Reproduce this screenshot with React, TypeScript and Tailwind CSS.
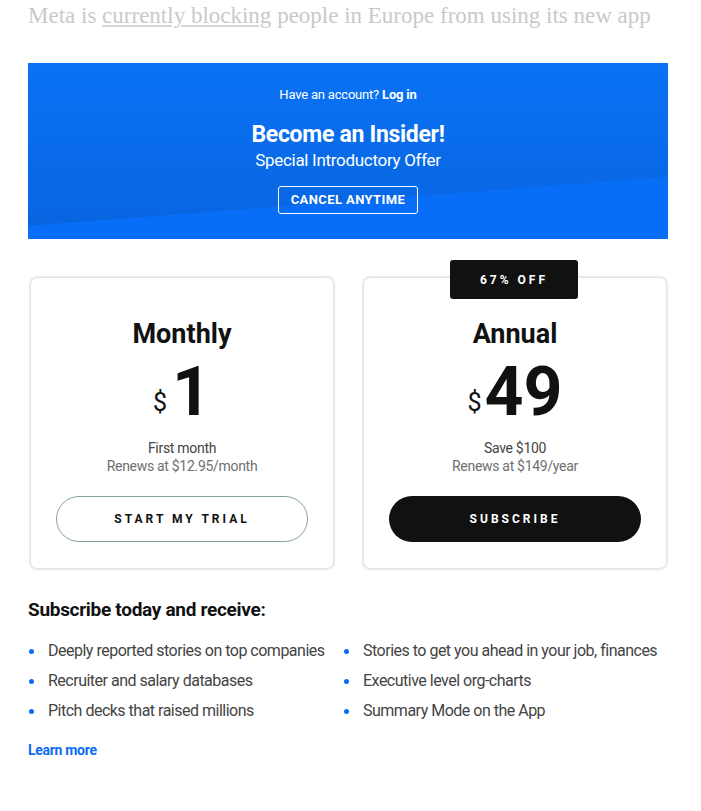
import React from 'react';

const benefits = [
  'Deeply reported stories on top companies',
  'Stories to get you ahead in your job, finances',
  'Recruiter and salary databases',
  'Executive level org-charts',
  'Pitch decks that raised millions',
  'Summary Mode on the App',
];

const sans = { fontFamily: 'Roboto, "Liberation Sans", sans-serif' };

const App: React.FC = () => {
  return (
    <div className="bg-white w-[701px] h-[811px] overflow-hidden px-7" style={sans}>
      <p
        className="text-[23px] leading-[32px] text-[#c9c9c9] whitespace-nowrap"
        style={{ fontFamily: '"Liberation Serif", serif' }}
      >
        Meta is <span className="underline decoration-[#d5d5d5] underline-offset-2">currently blocking</span> people in Europe from using its new app
      </p>

      {/* banner */}
      <div className="relative mt-[31px] h-[176px] w-[640px] overflow-hidden bg-[#0a72f5] text-white">
        <svg className="absolute inset-0" width="640" height="176" viewBox="0 0 640 176">
          <defs>
            <linearGradient id="bnr" x1="0" y1="0" x2="0" y2="1">
              <stop offset="0" stopColor="#0a72f5" />
              <stop offset="1" stopColor="#0865e0" />
            </linearGradient>
          </defs>
          <polygon points="0,0 640,0 640,114 0,163" fill="url(#bnr)" />
          <polygon points="0,163 640,114 640,176 0,176" fill="#086ef8" />
        </svg>
        <div className="relative flex flex-col items-center pt-[24px]">
          <p className="text-[13px] leading-[16px] tracking-[-0.2px]">
            Have an account? <span className="font-bold">Log in</span>
          </p>
          <p className="mt-[18px] text-[23px] leading-[28px] font-bold tracking-[-0.3px]">Become an Insider!</p>
          <p className="text-[17px] leading-[22px] tracking-[-0.3px]">Special Introductory Offer</p>
          <div className="mt-[15px] border border-white rounded-[3px] w-[140px] h-[28px] flex items-center justify-center text-[13px] font-bold tracking-[0.4px]">
            CANCEL ANYTIME
          </div>
        </div>
      </div>

      {/* cards */}
      <div className="mt-[21px] flex gap-[31px] px-[3px]">
        <div className="relative mt-[18px] w-[302px] h-[290px] rounded-[6px] bg-white shadow-[0_0_3px_1px_rgba(0,0,0,0.18)] flex flex-col items-center">
          <p className="mt-[41px] text-[27px] leading-[30px] font-bold text-[#111]">Monthly</p>
          <div className="mt-[11px] flex items-end text-[#111]">
            <span className="text-[25px] leading-[30px] mb-[6px] mr-[5px]">$</span>
            <span className="text-[68px] leading-[64px] font-bold">1</span>
          </div>
          <p className="mt-[15px] text-[14px] leading-[18px] text-[#444] tracking-[-0.3px]">First month</p>
          <p className="text-[14px] leading-[18px] text-[#6f6f6f] tracking-[-0.3px]">Renews at $12.95/month</p>
          <button className="mt-[21px] w-[252px] h-[46px] rounded-full border border-[#84a0a3] text-[12px] font-bold tracking-[3px] text-[#111]">
            START MY TRIAL
          </button>
        </div>

        <div className="relative mt-[18px] w-[302px] h-[290px] rounded-[6px] bg-white shadow-[0_0_3px_1px_rgba(0,0,0,0.18)] flex flex-col items-center">
          <div className="absolute -top-[18px] left-[86px] w-[128px] h-[39px] bg-[#111] rounded-[3px] flex items-center justify-center text-white text-[12px] font-bold tracking-[3px]">
            67% OFF
          </div>
          <p className="mt-[41px] text-[27px] leading-[30px] font-bold text-[#111]">Annual</p>
          <div className="mt-[11px] flex items-end text-[#111]">
            <span className="text-[25px] leading-[30px] mb-[6px] mr-[3px]">$</span>
            <span className="text-[68px] leading-[64px] font-bold">49</span>
          </div>
          <p className="mt-[15px] text-[14px] leading-[18px] text-[#444] tracking-[-0.3px]">Save $100</p>
          <p className="text-[14px] leading-[18px] text-[#6f6f6f] tracking-[-0.3px]">Renews at $149/year</p>
          <button className="mt-[21px] w-[252px] h-[46px] rounded-full bg-[#111] text-[12px] font-bold tracking-[3px] text-white">
            SUBSCRIBE
          </button>
        </div>
      </div>

      {/* benefits */}
      <p className="mt-[29px] text-[19px] leading-[26px] font-bold text-[#111] tracking-[-0.3px]">Subscribe today and receive:</p>
      <ul className="mt-[17px] grid grid-cols-[315px_1fr] gap-y-[8px]">
        {benefits.map((b) => (
          <li key={b} className="flex items-center h-[22px] text-[16px] text-[#444] tracking-[-0.5px] whitespace-nowrap">
            <span className="w-[5px] h-[5px] rounded-full bg-[#0a6cf5] ml-[1px] mr-[14px]" />
            {b}
          </li>
        ))}
      </ul>
      <p className="mt-[18px] text-[14px] font-bold text-[#0a6cf5] tracking-[-0.3px]">Learn more</p>
    </div>
  );
};

export default App;
